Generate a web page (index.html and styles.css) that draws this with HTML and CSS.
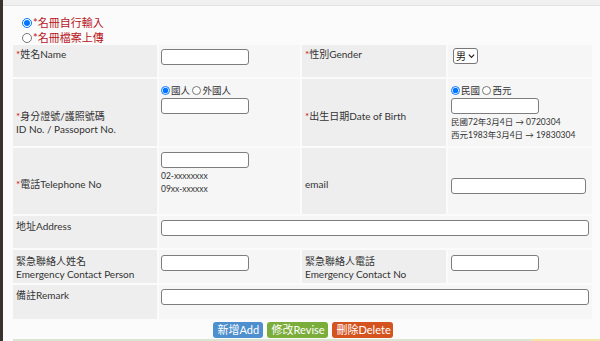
FILE: index.html
```html
<html>
  <head>
    <title>名冊登錄</title>
    <meta charset="utf-8" />
    <link rel="stylesheet" href="styles.css">
  </head>
  <body>
    <div class="topbar"></div>
    <div class="source">
      <label><input type="radio" name="src" checked /><span>*名冊自行輸入</span></label><br />
      <label><input type="radio" name="src" /><span>*名冊檔案上傳</span></label>
    </div>

    <table class="form">
      <colgroup>
        <col class="c-lbl" /><col class="c-val" /><col class="c-lbl" /><col class="c-lbl" />
      </colgroup>
      <tr class="r1">
        <td class="lbl"><span class="star">*</span>姓名Name</td>
        <td class="val"><input type="text" class="box short" /></td>
        <td class="lbl"><span class="star">*</span>性別Gender</td>
        <td class="val right">
          <div class="select">男<svg width="8" height="6" viewBox="0 0 8 6"><path d="M1 1.5 L4 4.5 L7 1.5" fill="none" stroke="#222" stroke-width="1.4"/></svg></div>
        </td>
      </tr>
      <tr class="r2">
        <td class="lbl deep"><span class="star">*</span>身分證號/護照號碼<br />ID No. / Passoport No.</td>
        <td class="val">
          <div class="opt"><input type="radio" name="nat" checked />國人 <input type="radio" name="nat" />外國人</div>
          <input type="text" class="box short" />
        </td>
        <td class="lbl deep"><span class="star">*</span>出生日期Date of Birth</td>
        <td class="val right">
          <div class="opt"><input type="radio" name="era" checked />民國 <input type="radio" name="era" />西元</div>
          <input type="text" class="box short" />
          <div class="hint">民國72年3月4日 → 0720304<br />西元1983年3月4日 → 19830304</div>
        </td>
      </tr>
      <tr class="r3">
        <td class="lbl deep"><span class="star">*</span>電話Telephone No</td>
        <td class="val">
          <input type="text" class="box short" />
          <div class="hint">02-xxxxxxxx<br />09xx-xxxxxx</div>
        </td>
        <td class="lbl deep">email</td>
        <td class="val right deep"><input type="text" class="box mid" /></td>
      </tr>
      <tr class="r4">
        <td class="lbl">地址Address</td>
        <td class="val" colspan="3"><input type="text" class="box full" /></td>
      </tr>
      <tr class="r5">
        <td class="lbl">緊急聯絡人姓名<br />Emergency Contact Person</td>
        <td class="val"><input type="text" class="box short" /></td>
        <td class="lbl">緊急聯絡人電話<br />Emergency Contact No</td>
        <td class="val right"><input type="text" class="box short" /></td>
      </tr>
      <tr class="r6">
        <td class="lbl">備註Remark</td>
        <td class="val" colspan="3"><input type="text" class="box full" /></td>
      </tr>
    </table>

    <div class="actions">
      <button type="button" class="btn add">新增Add</button>
      <button type="button" class="btn revise">修改Revise</button>
      <button type="button" class="btn delete">刪除Delete</button>
    </div>
    <div class="nextbar"><div class="g"></div><div class="y"></div></div>
  </body>
</html>
```

FILE: styles.css
```css
* {
  box-sizing: border-box;
}
body  {
  margin: 0;
  height: 341px;
  overflow: hidden;
  background-color: #fbfbfb;
  border-left: 3px solid #38332f;
  font-family: Lato, "Noto Sans CJK TC", sans-serif;
  color: #333;
}
.topbar  {
  height: 6px;
  background-color: #f0f0f0;
  border-bottom: 1px solid #e2e2e2;
}
.source  {
  padding: 9px 0 0 19px;
  font-size: 11px;
  line-height: 15px;
  color: #b8141a;
}
.source input  {
  width: 10px;
  height: 10px;
  margin: 0 1px 0 0;
  vertical-align: -1px;
}

/* main form table */
.form  {
  border-spacing: 2px;
  margin: -2px 0 0 8px;
  width: 583px;
  table-layout: fixed;
}
.c-lbl  {
  width: 144px;
}
.c-val  {
  width: 141px;
}
.form td  {
  padding: 4px 2px 0;
  vertical-align: top;
  font-size: 10px;
  line-height: 13px;
}
.form td.lbl  {
  background-color: #eeeeee;
  padding-left: 3px;
}
.form td.val  {
  background-color: #f6f6f6;
}
.form td.right  {
  padding-left: 3px;
}
.star  {
  color: #d01010;
}
.r1  { height: 32px; }
.r2  { height: 67px; }
.r3  { height: 66px; }
.r4  { height: 32px; }
.r5  { height: 33px; }
.r6  { height: 34px; }
.r1 td.lbl  {
  padding-top: 3px;
}
.r2 td.deep  {
  padding-top: 31px;
}
.r2 td.val  {
  padding-top: 5px;
}
.r3 td.deep  {
  padding-top: 30px;
}
.r5 td  {
  padding-top: 5px;
}

.box  {
  display: block;
  height: 16px;
  padding: 0 3px;
  margin: 0;
  border: 1px solid #7d7d7d;
  border-radius: 3px;
  background-color: #fff;
}
.short  { width: 88px; }
.mid  { width: 135px; }
.full  { width: 428px; }

.select  {
  display: inline-flex;
  align-items: center;
  gap: 2px;
  height: 16px;
  width: 25px;
  margin: -1px 0 0 2px;
  padding: 0 2px;
  border: 1px solid #777;
  border-radius: 3px;
  background-color: #fff;
  font-size: 10px;
  color: #222;
}
.opt  {
  height: 13px;
  margin-bottom: 1px;
  font-size: 9.5px;
}
.opt input  {
  width: 9px;
  height: 9px;
  margin: 0 1px 0 0;
  vertical-align: -1px;
}
.hint  {
  margin-top: 2px;
  font-size: 8.5px;
  line-height: 13px;
}

/* buttons */
.actions  {
  display: flex;
  justify-content: center;
  gap: 4px;
  margin: 1px 0 0 10px;
  width: 579px;
}
.btn  {
  height: 16px;
  padding: 0 5px;
  border: 0;
  border-radius: 3px;
  color: white;
  font-family: Lato, "Noto Sans CJK TC", sans-serif;
  font-size: 11px;
  line-height: 16px;
  white-space: nowrap;
}
.add  {
  width: 50px;
  background-color: #4e8fcd;
}
.revise  {
  width: 61px;
  background-color: #7aad3a;
}
.delete  {
  width: 61px;
  background-color: #d4531f;
}
.nextbar  {
  display: flex;
  height: 4px;
  margin: 1px 0 0 10px;
}
.nextbar .g  {
  flex: 1;
  background-color: #dbe6d2;
}
.nextbar .y  {
  width: 68px;
  background-color: #f2e5a6;
}
```
